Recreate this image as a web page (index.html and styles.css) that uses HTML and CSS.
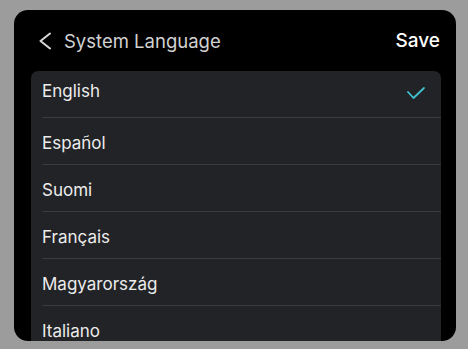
FILE: index.html
```html
<!DOCTYPE html>
<html lang="en">
<head>
    <meta charset="UTF-8">
    <meta name="viewport" content="width=device-width, initial-scale=1.0">
    <title>System Language</title>
    <link rel="stylesheet" href="styles.css">
</head>
<body>
    <div class="panel">
        <header class="top-bar">
            <button class="back">
                <svg width="12" height="18" viewBox="0 0 12 18">
                    <path d="M11 1.5 L1.5 9 L11 16.5" fill="none" stroke="#d6d6d6" stroke-width="2" stroke-linecap="round" stroke-linejoin="round"/>
                </svg>
            </button>
            <h1>System Language</h1>
            <button class="save">Save</button>
        </header>

        <!-- Liste des langues -->
        <ul class="lang-list">
            <li class="lang active">
                <span>English</span>
                <svg class="check" width="18" height="13" viewBox="0 0 18 13">
                    <path d="M1 5 L6.5 11 L17 1" fill="none" stroke="#3fc1cf" stroke-width="1.8" stroke-linecap="round" stroke-linejoin="round"/>
                </svg>
            </li>
            <li class="lang"><span>Español</span></li>
            <li class="lang"><span>Suomi</span></li>
            <li class="lang"><span>Français</span></li>
            <li class="lang"><span>Magyarország</span></li>
            <li class="lang"><span>Italiano</span></li>
        </ul>
    </div>
</body>
</html>
```

FILE: styles.css
```css
body {
    margin: 0;
    background-color: #9c9c9c;
    font-family: Inter, "Noto Sans", sans-serif;
}

.panel {
    margin: 10px 0 0 14px;
    width: 442px;
    height: 331px;
    background-color: #000;
    border-radius: 14px;
    overflow: hidden;
}

.top-bar {
    display: flex;
    align-items: center;
    height: 61px;
    padding: 0 16px 0 25px;
}

.back {
    display: flex;
    background: none;
    border: none;
    padding: 0;
    margin-right: 13px;
    cursor: pointer;
}

.top-bar h1 {
    flex: 1;
    margin: 0;
    font-size: 18.5px;
    font-weight: 400;
    color: #d2d2d2;
}

.save {
    background: none;
    border: none;
    padding: 0;
    font-family: inherit;
    font-size: 19px;
    font-weight: 500;
    color: #fff;
    cursor: pointer;
}

.lang-list {
    list-style: none;
    margin: 0 15px 0 17px;
    padding: 0 0 0 11px;
    background-color: #222326;
    border-radius: 7px 7px 0 0;
}

.lang {
    display: flex;
    align-items: center;
    justify-content: space-between;
    box-sizing: border-box;
    height: 47px;
    padding: 4px 16px 0 0;
    border-bottom: 1px solid #3a3b3f;
    font-size: 17px;
    color: #ececec;
}

.lang.active {
    padding: 0 16px 7px 0;
}

.check {
    margin-top: 5px;
}
```
